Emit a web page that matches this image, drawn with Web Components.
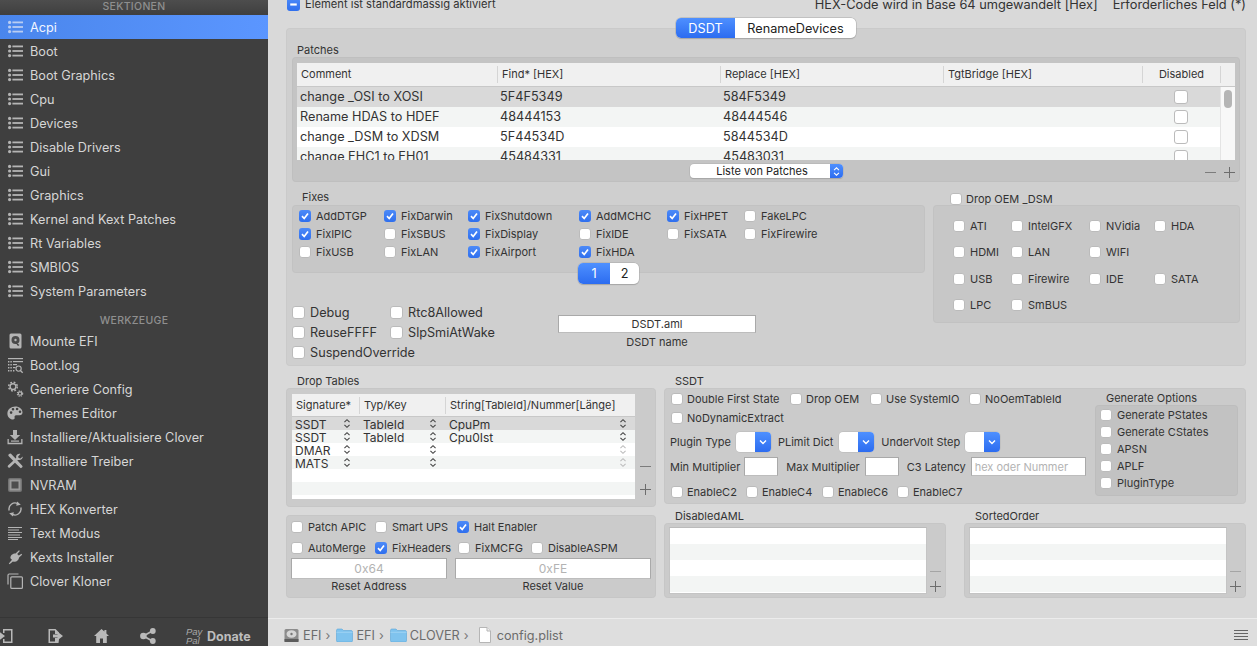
<!DOCTYPE html>
<html>
<head>
<meta charset="utf-8">
<style>
  html, body { margin: 0; height: 100%; overflow: hidden; background: #d9d9d9; }
  body { font-family: Inter, "Liberation Sans", sans-serif; color: #333; }
</style>
</head>
<body>
<clover-app></clover-app>
<script>
const ICONS = {
  list: '<circle cx="2.6" cy="3.4" r="1.6"/><circle cx="2.6" cy="8" r="1.6"/><circle cx="2.6" cy="12.6" r="1.6"/><rect x="5.4" y="2.5" width="10.6" height="1.8"/><rect x="5.4" y="7.1" width="10.6" height="1.8"/><rect x="5.4" y="11.7" width="10.6" height="1.8"/>',
  hdd: '<rect x="2.5" y="0.5" width="12" height="15" rx="1.5"/><circle cx="8.5" cy="7" r="4" fill="#4a4a4a"/><circle cx="8.5" cy="7" r="1.2"/><path d="M8 9l3 4 1.5-1z" fill="#3e3e3e"/>',
  log: '<rect x="1" y="1" width="15" height="1.2"/><rect x="6" y="4" width="10" height="1.2"/><rect x="6" y="7" width="4" height="1.2"/><rect x="6" y="10" width="2.5" height="1.2"/><path d="M1 4h1.4v1.4H1zM3.4 4h1.4v1.4H3.4zM1 7h1.4v1.4H1zM3.4 7h1.4v1.4H3.4zM1 10h1.4v1.4H1zM3.4 10h1.4v1.4H3.4zM1 13h1.4v1.4H1zM3.4 13h1.4v1.4H3.4zM6 13h1.4v1.4H6z"/><circle cx="11.6" cy="11.6" r="2.6" fill="none" stroke="currentColor" stroke-width="1.1"/><path d="M13.4 13.5l2.3 2.3" stroke="currentColor" stroke-width="1.3"/>',
  gears: '<g fill="none" stroke="currentColor"><circle cx="6" cy="5.6" r="2.9" stroke-width="1.4"/><circle cx="6" cy="5.6" r="4.3" stroke-width="1.5" stroke-dasharray="1.8 1.6"/><circle cx="13" cy="12.6" r="1.7" stroke-width="1.1"/><circle cx="13" cy="12.6" r="2.7" stroke-width="1.1" stroke-dasharray="1.2 1"/></g>',
  palette: '<path fill-rule="evenodd" d="M8.4 1.6C3.9 1.6.4 4.6.4 8.4c0 3.5 2.6 6 5.6 6 1.5 0 1.9-.9 1.6-1.9-.3-1.2.2-2.3 1.6-2.3h3.4c1.8 0 2.9-1 2.9-2.6 0-3.5-3.3-6-7.1-6zM4.1 8.9a1.3 1.3 0 1 1 0-2.6 1.3 1.3 0 0 1 0 2.6zM6 5.5a1.3 1.3 0 1 1 0-2.6 1.3 1.3 0 0 1 0 2.6zM10.1 5.3a1.3 1.3 0 1 1 0-2.6 1.3 1.3 0 0 1 0 2.6zM13 8a1.3 1.3 0 1 1 0-2.6A1.3 1.3 0 0 1 13 8z"/>',
  download: '<path d="M6 1h4v5h3.2L8 11 2.8 6H6z"/><path d="M.5 10v5.2h15V10h-1.3v3.8H1.800V10z"/><rect x="4" y="11.5" width="8" height="1.2"/>',
  tools: '<path d="M1.8 1l2-.6 5 5.4 2.8 3 3.9 4.3c.6.8-1.2 2.5-2 1.9L9 10.7 6.2 7.7 1.3 2.700z"/><path d="M15.800 3.400l-2.400 2.200-1.800-.5-.5-1.700L13.400.9c-1.900-.6-4.300.8-4.300 3l.1 1.100L1 12.600c-1 1 .7 2.900 1.900 1.900l7.900-7.600 1.200.2c2.200.1 4-2.200 3.800-3.700z"/>',
  chip: '<rect x="1" y="1" width="14" height="14" rx="2" opacity=".45"/><rect x="2.5" y="2.5" width="11" height="11" opacity=".6"/><rect x="4.5" y="4.5" width="7" height="7" fill="#4d4d4d"/>',
  refresh: '<g fill="none" stroke="currentColor" stroke-width="1.4"><path d="M2.200 9.500A6 6 0 0 1 11 2.800"/><path d="M13.800 6.500A6 6 0 0 1 5 13.200"/></g><path d="M10.200.6l3.600 3.200-4.600.9zM5.800 15.400L2.200 12.200l4.600-.9z"/>',
  lines: '<rect x="1" y="2" width="14" height="1"/><rect x="1" y="4.5" width="11" height="1"/><rect x="1" y="7" width="14" height="1"/><rect x="1" y="9.5" width="12" height="1"/><rect x="1" y="12" width="14" height="1"/><rect x="1" y="14" width="10" height="1"/>',
  plug: '<path d="M9.500 4.500l3.500-3.300.9.900-2.700 3 1.600 1.500 2.700-1.900.6 1-3 2.700c-.4 3-3.300 5.200-6.200 4L3.500 15.200l-.7-.6 3.200-3.800-1.400-1.300c-1-2.600 2.200-5.400 4.900-5z" transform="translate(-1 0)"/>',
  copy: '<path d="M1 11.500V2.200C1 1.500 1.500 1 2.200 1h9.300" fill="none" stroke="currentColor" stroke-width="1.2"/><rect x="3.800" y="3.800" width="11.600" height="11.600" rx="1" fill="none" stroke="currentColor" stroke-width="1.2"/>',
  enter: '<path d="M5 1h9.500v14H5v-4h1.500v2.500H13V2.500H6.500V5H5z"/><path d="M-4 6.500h5V3.500L7 8l-6 4.500v-3h-5z"/>',
  leave: '<path d="M1.500 1h7L12 4.500V6H8V2.500H3v11h5V10h4v1.500L11.500 15h-10z"/><path d="M6 6.500h4.500V3.800L16 8l-5.500 4.200V9.500H6z"/>',
  home: '<path d="M8.500 1L1 8h2.200v7h3.800v-4.500h3V15h3.800V8H16l-2.600-2.500V2h-2v1.600z"/>',
  share: '<circle cx="12.800" cy="3" r="2.900"/><circle cx="12.800" cy="13" r="2.900"/><circle cx="3.400" cy="8" r="3.300"/><path d="M3.400 7l9-5 .8 1.600-9 5zM3.400 9l9 5 .8-1.600-9-5z"/>'
};

function icon(name) {
  return `<svg viewBox="0 0 16 16" width="16" height="16" fill="currentColor" style="overflow:visible;display:block">${ICONS[name]}</svg>`;
}

const CHEVRONS = '<svg viewBox="0 0 8 12" width="8" height="11" fill="none" stroke="currentColor" stroke-width="1.2"><path d="M1.200 4.500L4 1.800l2.800 2.700M1.200 7.500L4 10.200l2.800-2.700"/></svg>';

class BaseEl extends HTMLElement {
  constructor() {
    super();
    this.attachShadow({ mode: 'open' });
  }
  connectedCallback() {
    this.shadowRoot.innerHTML = this.render();
  }
}

class SideItem extends BaseEl {
  render() {
    return `<style>
      :host { display: flex; align-items: center; height: 24px; padding-left: 7px; gap: 7px; color: #d6d6d6; font-size: 12.7px; }
      :host([active]) { background: linear-gradient(90deg, #4a86ec, #5b96ff); color: #f2f6ff; }
      .i { color: #b4b4b4; width: 16px; height: 16px; flex: none; }
      :host([active]) .i { color: #b9cdf2; }
    </style><span class="i">${icon(this.getAttribute('icon'))}</span><slot></slot>`;
  }
}

class SideBar extends BaseEl {
  render() {
    const sek = ['Acpi','Boot','Boot Graphics','Cpu','Devices','Disable Drivers','Gui','Graphics','Kernel and Kext Patches','Rt Variables','SMBIOS','System Parameters'];
    const tools = [['hdd','Mounte EFI'],['log','Boot.log'],['gears','Generiere Config'],['palette','Themes Editor'],['download','Installiere/Aktualisiere Clover'],['tools','Installiere Treiber'],['chip','NVRAM'],['refresh','HEX Konverter'],['lines','Text Modus'],['plug','Kexts Installer'],['copy','Clover Kloner']];
    return `<style>
      :host { display: flex; flex-direction: column; width: 268px; height: 646px; flex: none; background: #3f3f3f; box-sizing: border-box; }
      .top { background: linear-gradient(#4d4d4d, #3f3f3f); }
      h4 { margin: 0; font-size: 10.5px; font-weight: 500; color: #8f8f8f; text-align: center; letter-spacing: .3px; line-height: 14px; }
      .t1 { height: 15px; box-sizing: border-box; padding-top: 1px; line-height: 12px; }
      .t2 { margin: 11px 0 1px; height: 14px; line-height: 14px; }
      .grow { flex: 1; }
      .foot { height: 29px; border-top: 1px solid #363636; display: flex; align-items: center; color: #b9b9b9; overflow: hidden; box-sizing: border-box; padding-top: 8px; }
      .foot span.ic { flex: none; display: block; }
      .pp { font: italic 9.5px/9px "Liberation Sans", sans-serif; color: #a8a8a8; width: 20px; margin-left: 30px; }
      .don { font-size: 12.5px; font-weight: 700; color: #bdbdbd; margin-left: 1px; }
    </style>
    <div class="top"><h4 class="t1">SEKTIONEN</h4></div>
    ${sek.map((s, i) => `<side-item icon="list"${i === 0 ? ' active' : ''}>${s}</side-item>`).join('')}
    <h4 class="t2">WERKZEUGE</h4>
    ${tools.map(t => `<side-item icon="${t[0]}">${t[1]}</side-item>`).join('')}
    <div class="grow"></div>
    <div class="foot">
      <span class="ic" style="margin-left:-2px">${icon('enter')}</span>
      <span class="ic" style="margin-left:33px">${icon('leave')}</span>
      <span class="ic" style="margin-left:30px">${icon('home')}</span>
      <span class="ic" style="margin-left:31px">${icon('share')}</span>
      <span class="pp">Pay<br>Pal</span>
      <span class="don">Donate</span>
    </div>`;
  }
}

class XCheck extends BaseEl {
  render() {
    const mark = this.hasAttribute('mixed')
      ? '<svg viewBox="0 0 12 12"><path d="M3 6h6" stroke="#fff" stroke-width="2" fill="none"/></svg>'
      : '<svg viewBox="0 0 12 12"><path d="M3 6.200l2.200 2.300L9 3.500" stroke="#fff" stroke-width="1.7" fill="none"/></svg>';
    const on = this.hasAttribute('checked') || this.hasAttribute('mixed');
    return `<style>
      :host { display: inline-flex; align-items: center; gap: var(--cb-gap, 5px); height: var(--cb-row, 18px); white-space: nowrap; font-size: inherit; }
      .b { width: var(--cb, 12px); height: var(--cb, 12px); flex: none; box-sizing: border-box; border-radius: 3px; background: #fff; border: 1px solid #bbb; display: block; }
      .b.on { background: linear-gradient(#4c8af8, #2f6fee); border: 0; }
      svg { display: block; width: 100%; height: 100%; }
    </style><span class="b${on ? ' on' : ''}">${on ? mark : ''}</span><slot></slot>`;
  }
}

class SegCtl extends BaseEl {
  render() {
    const items = this.getAttribute('items').split('|');
    const widths = (this.getAttribute('widths') || '').split('|');
    return `<style>
      :host { display: inline-flex; border-radius: 5px; box-shadow: 0 0 0 .5px #aaa, 0 1px 1px rgba(0,0,0,.2); background: #fff; overflow: hidden; height: var(--h, 20px); font-size: 12.7px; color: #222; }
      span { display: flex; align-items: center; justify-content: center; }
      .on { background: linear-gradient(#4e90ff, #2c6cf0); color: #fff; }
    </style>${items.map((s, i) => `<span class="${i === 0 ? 'on' : ''}" style="width:${widths[i]}px">${s}</span>`).join('')}`;
  }
}

class PopUp extends BaseEl {
  render() {
    return `<style>
      :host { display: flex; width: 153px; height: 14px; background: #fff; border-radius: 4px; box-shadow: 0 0 0 .5px #b0b0b0, 0 1px 1px rgba(0,0,0,.2); overflow: hidden; font-size: 11px; color: #222; }
      .t { flex: 1; text-align: center; line-height: 14px; padding-left: 5px; }
      .a { width: 13px; background: linear-gradient(#4e90ff, #2c6cf0); color: #fff; display: flex; align-items: center; justify-content: center; }
      svg { height: 11px; width: 7px; }
    </style><span class="t"><slot></slot></span><span class="a">${CHEVRONS}</span>`;
  }
}

class MiniSelect extends BaseEl {
  render() {
    return `<style>
      :host { display: inline-flex; flex: none; width: 35px; height: 20px; background: #fff; border-radius: 4px; box-shadow: 0 0 0 .5px #b8b8b8; overflow: hidden; }
      i { flex: 1; }
      b { width: 16px; background: linear-gradient(#4e90ff, #2c6cf0); display: flex; align-items: center; justify-content: center; }
    </style><i></i><b><svg viewBox="0 0 8 6" width="8" height="6" fill="none" stroke="#fff" stroke-width="1.4"><path d="M1 1.500L4 4.500l3-3"/></svg></b>`;
  }
}

class TextBox extends BaseEl {
  render() {
    return `<style>
      :host { display: flex; align-items: center; justify-content: var(--tb-align, center); box-sizing: border-box; background: #fff; border: 1px solid #a9a9a9; border-bottom-color: #bdbdbd; color: var(--tb-color, #b3b3b3); font-size: var(--tb-size, 13px); padding: 0 3px; white-space: nowrap; }
    </style><slot></slot>`;
  }
}

class PlusMinus extends BaseEl {
  render() {
    return `<style>
      :host { display: inline-flex; flex-direction: var(--pm-dir, row); gap: var(--pm-gap, 9px); align-items: center; color: #6d6d6d; }
      svg { display: block; }
      .m { color: var(--pm-minus, #7c7c7c); }
    </style><svg class="m" width="11" height="11" stroke="currentColor"><path d="M0 5.500h11"/></svg><svg width="11" height="11" stroke="currentColor"><path d="M0 5.500h11M5.500 0v11"/></svg>`;
  }
}

class PatchTable extends BaseEl {
  render() {
    const rows = [['change _OSI to XOSI','5F4F5349','584F5349'],['Rename HDAS to HDEF','48444153','48444546'],['change _DSM to XDSM','5F44534D','5844534D'],['change EHC1 to EH01','45484331','45483031']];
    const bg = ['#d9d9d9','#f3f5f4','#fff','#f3f5f4'];
    const cols = '200px 223px 223px 199px 78px 15px';
    return `<style>
      :host { display: block; position: relative; background: #fff; height: 97px; overflow: hidden; }
      .r { display: grid; grid-template-columns: ${cols}; align-items: center; }
      .h { height: 23px; background: #f0f0f0; border-bottom: 1px solid #c8c8c8; font-size: 11px; color: #333; }
      .h span { border-left: 1px solid #d5d5d5; padding-left: 4px; height: 17px; line-height: 17px; box-sizing: border-box; }
      .h span:first-child { border: 0; }
      .h .c { text-align: center; padding: 0; }
      .d { height: 20px; font-size: 12.7px; color: #333; }
      .d span { padding: 0 0 2px 3px; }
      .d .cb { display: flex; justify-content: center; padding: 0; --cb: 14px; --cb-row: 20px; --cb-gap: 0; }
      .sb { position: absolute; right: 0; top: 24px; bottom: 0; width: 14px; background: #f8f8f8; border-left: 1px solid #e4e4e4; }
      .sb i { display: block; width: 8px; height: 18px; margin: 3px 3px; border-radius: 4px; background: #b5b5b5; }
    </style>
    <div class="r h"><span>Comment</span><span>Find* [HEX]</span><span>Replace [HEX]</span><span>TgtBridge [HEX]</span><span class="c">Disabled</span><span></span></div>
    ${rows.map((r, i) => `<div class="r d" style="background:${bg[i]}"><span>${r[0]}</span><span>${r[1]}</span><span>${r[2]}</span><span></span><span class="cb"><x-check></x-check></span><span></span></div>`).join('')}
    <div class="sb"><i></i></div>`;
  }
}

class DropTable extends BaseEl {
  render() {
    const rows = [['SSDT','TableId','CpuPm'],['SSDT','TableId','Cpu0Ist'],['DMAR','',''],['MATS','','']];
    const bg = ['#d9d9d9','#f3f5f4','#fff','#f3f5f4','#fff','#f3f5f4'];
    const cols = '67px 86px 190px';
    const cell = (t, faint) => `<span class="cell">${t}<em style="${faint ? 'color:#bdbdbd' : ''}">${CHEVRONS}</em></span>`;
    const body = bg.map((c, i) => {
      const r = rows[i];
      return `<div class="r d" style="background:${c}">${r ? cell(r[0]) + cell(r[1]) + cell(r[2], i > 1) : ''}</div>`;
    }).join('');
    return `<style>
      :host { display: block; background: #fff; width: 343px; height: 105px; overflow: hidden; flex: none; }
      .r { display: grid; grid-template-columns: ${cols}; }
      .h { height: 22px; align-items: center; background: #f0f0f0; border-bottom: 1px solid #c8c8c8; font-size: 11px; }
      .h span { border-left: 1px solid #d5d5d5; padding-left: 4px; height: 17px; line-height: 17px; }
      .h span:first-child { border: 0; padding-left: 4px; }
      .d { height: 13px; font-size: 12px; line-height: 15px; color: #333; }
      .cell { position: relative; padding-left: 3px; display: flex; height: 13px; }
      .d .cell:nth-child(2), .d .cell:nth-child(3) { padding-left: 4px; }
      em { display: block; margin: 0 8px 0 auto; color: #444; font-style: normal; }
      svg { display: block; margin-top: 1px; }
    </style>
    <div class="r h"><span>Signature*</span><span>Typ/Key</span><span>String[TableId]/Nummer[Länge]</span></div>${body}`;
  }
}

class StripeList extends BaseEl {
  render() {
    return `<style>
      :host { display: block; width: 258px; height: 67px; background: repeating-linear-gradient(#fff 0 16px, #f3f5f4 16px 32px); border: 1px solid #c4c4c4; border-top-color: #bbb; box-sizing: border-box; flex: none; }
    </style>`;
  }
}

class GroupBox extends BaseEl {
  render() {
    return `<style>
      :host { display: block; background: var(--gb-bg, #c7c7c7); border-radius: 4px; box-shadow: inset 0 0 0 1px rgba(0,0,0,.025); box-sizing: border-box; position: relative; }
    </style><slot></slot>`;
  }
}

class FieldLabel extends BaseEl {
  render() {
    return `<style>
      :host { display: block; font-size: 11px; line-height: 13px; color: #333; padding-left: var(--fl-pad, 11px); }
    </style><slot></slot>`;
  }
}

class StatusBar extends BaseEl {
  render() {
    const folder = '<svg width="17" height="14" viewBox="0 0 17 14"><path d="M.5 2.500C.5 1.500 1 1 2 1h4l1.500 1.500H15c1 0 1.500.5 1.500 1.500v8.500c0 1-.5 1.500-1.500 1.500H2c-1 0-1.500-.5-1.500-1.500z" fill="#7fc3ee" stroke="#5ba6d8" stroke-width=".6"/><path d="M.5 4.300h16" stroke="#9ed3f3"/></svg>';
    const disk = '<svg width="15" height="15" viewBox="0 0 15 15"><rect x=".5" y="1" width="14" height="13" rx="1.500" fill="#8c8c8c"/><ellipse cx="7.500" cy="6" rx="5" ry="3.800" fill="#d6d6d6"/><circle cx="7.500" cy="6" r="1.200" fill="#777"/><rect x=".5" y="11" width="14" height="3" fill="#5c5c5c"/></svg>';
    const doc = '<svg width="12" height="16" viewBox="0 0 12 16"><path d="M.5.500h7.500l3.500 3.500v11.500H.5z" fill="#fff" stroke="#b5b5b5"/><path d="M8 .500V4h3.500" fill="#eee" stroke="#b5b5b5"/></svg>';
    const sep = '<b>›</b>';
    return `<style>
      :host { display: flex; align-items: center; height: 28px; flex: none; box-sizing: border-box; background: #dedede; border-top: 1px solid #ececec; font-size: 12.7px; color: #6c6c6c; padding: 5px 9px 0 16px; }
      svg { display: block; flex: none; }
      b { font-weight: 400; margin: 0 6px 0 4px; color: #777; }
      span { white-space: nowrap; }
      .end { margin-left: auto; }
    </style>${disk}<span style="margin-left:4px">EFI</span>${sep}${folder}<span style="margin-left:3px">EFI</span>${sep}${folder}<span style="margin-left:3px">CLOVER</span>${sep}<i style="width:4px"></i>${doc}<span style="margin-left:6px">config.plist</span>
    <svg class="end" width="14" height="11" viewBox="0 0 14 11" stroke="#666"><path d="M0 .5h14M0 3.500h14M0 6.500h14M0 9.500h14"/></svg>`;
  }
}

class CloverApp extends BaseEl {
  render() {
    const chk = (label, on, w) => `<x-check${on ? ' checked' : ''}${w ? ` style="width:${w}px"` : ''}>${label}</x-check>`;
    const fixes = [['AddDTGP',1],['FixDarwin',1],['FixShutdown',1],['AddMCHC',1],['FixHPET',1],['FakeLPC',0],
      ['FixIPIC',1],['FixSBUS',0],['FixDisplay',1],['FixIDE',0],['FixSATA',0],['FixFirewire',0],
      ['FixUSB',0],['FixLAN',0],['FixAirport',1],['FixHDA',1]];
    const oem = ['ATI','IntelGFX','NVidia','HDA','HDMI','LAN','WIFI','','USB','Firewire','IDE','SATA','LPC','SmBUS'];
    return `<style>
      :host { display: flex; width: 1257px; height: 646px; overflow: hidden; }
      .main { flex: 1; display: flex; flex-direction: column; min-width: 0; background: #d9d9d9; }
      .content { flex: 1; padding: 0 11px 0 18px; overflow: hidden; font-size: 11px; }
      .topbar { display: flex; height: 14px; margin-top: -3px; align-items: center; font-size: 11.2px; padding-left: 1px; --cb: 13px; }
      .topbar .r { margin-left: auto; font-size: 12.8px; white-space: nowrap; }
      .topbar .r2 { margin-left: 15px; font-size: 12.8px; white-space: nowrap; }
      .big { margin-top: 17px; height: 338px; --gb-bg: #cfcfcf; padding: 0 6px; }
      .tabs { display: flex; justify-content: center; height: 10px; --h: 20px; position: relative; top: -10px; }
      .patches { margin-top: 6px; }
      .patches-box { height: 125px; --gb-bg: #c4c4c4; padding: 6px 5px 0; display: flex; flex-direction: column; }
      .pfoot { display: grid; grid-template-columns: 1fr auto 1fr; align-items: center; margin-top: 4px; }
      .pfoot plus-minus { justify-self: end; margin-top: 2px; --pm-gap: 8px; }
      .mid { display: flex; gap: 8px; margin-top: 9px; }
      .mid-l { width: 633px; flex: none; }
      .mid-r { width: 307px; flex: none; }
      .fixes { height: 68px; margin-top: 1px; --gb-bg: #c7c7c7; padding: 2px 0 0 7px; }
      .fgrid { display: grid; grid-template-columns: 85px 84px 111px 88px 77px auto; }
      seg-ctl.s2 { margin: 2px 0 0 279px; --h: 21px; display: flex; width: 61px; }
      .opts { display: flex; margin-top: 29px; --cb: 13px; --cb-row: 20px; font-size: 12.7px; }
      .ogrid { display: grid; grid-template-columns: 98px auto; width: 266px; align-content: start; }
      .dsdt { width: 198px; text-align: center; margin-top: 13px; font-size: 11px; }
      .dsdt text-box { height: 18px; --tb-color: #333; --tb-size: 11px; margin-bottom: 2px; }
      .dsdt span { line-height: 15px; }
      .oemhead { height: 13px; margin-top: 1px; padding-left: 17px; display: flex; align-items: center; --cb-gap: 4px; }
      .oem { height: 118px; --gb-bg: #c7c7c7; padding: 8px 0 0 20px; }
      .ogr { display: grid; grid-template-columns: 58px 78px 65px auto; grid-auto-rows: 26.3px; --cb-row: 26px; }
      .lower { display: grid; grid-template-columns: 370px 582px; gap: 0 8px; margin-top: 9px; }
      .col { min-width: 0; }
      .drop { height: 119px; --gb-bg: #cbcbcb; padding: 6px; display: flex; gap: 5px; }
      .drop plus-minus, .list plus-minus { --pm-dir: column; align-self: flex-end; }
      .drop plus-minus { --pm-gap: 12px; margin-bottom: 6px; }
      .misc { height: 83px; margin-top: 8px; --gb-bg: #cbcbcb; padding: 2px 5px 0; --cb: 12px; }
      .mrow { display: flex; height: 20px; align-items: center; }
      .mrow + .mrow { margin-top: 1px; }
      .minp { display: grid; grid-template-columns: 156px 196px; gap: 0 8px; text-align: center; }
      .minp text-box { height: 21px; --tb-size: 12px; }
      .minp span { line-height: 15px; }
      .ssdt { height: 116px; --gb-bg: #cbcbcb; padding: 2px 8px 0 6px; display: flex; }
      .ss-l { width: 425px; flex: none; }
      .srow { display: flex; align-items: center; gap: 0; --cb: 12px; --cb-gap: 4px; white-space: nowrap; }
      .gen { flex: 1; }
      .gen field-label { margin-top: 2px; }
      .genbox { height: 91px; --gb-bg: #c2c2c2; padding: 1px 0 0 5px; display: flex; flex-direction: column; --cb: 12px; --cb-row: 17px; }
      .lists { display: grid; grid-template-columns: 282px 282px; gap: 18px; padding-top: 6px; }
      .list { height: 75px; --gb-bg: #cbcbcb; padding: 4px 5px 0; display: flex; }
      .list plus-minus { margin: 39px 0 0 3px; --pm-gap: 4px; --pm-minus: #a5a5a5; align-self: flex-start; }
    </style>
    <side-bar></side-bar>
    <div class="main">
      <div class="content">
        <div class="topbar">
          <x-check mixed>Element ist standardmassig aktiviert</x-check>
          <span class="r">HEX-Code wird in Base 64 umgewandelt [Hex]</span>
          <span class="r2">Erforderliches Feld (*)</span>
        </div>
        <group-box class="big">
          <div class="tabs"><seg-ctl items="DSDT|RenameDevices" widths="59|121"></seg-ctl></div>
          <div class="patches">
            <field-label style="--fl-pad:5px">Patches</field-label>
            <group-box class="patches-box">
              <patch-table></patch-table>
              <div class="pfoot"><i></i><pop-up>Liste von Patches</pop-up><plus-minus></plus-minus></div>
            </group-box>
          </div>
          <div class="mid">
            <div class="mid-l">
              <field-label style="--fl-pad:10px">Fixes</field-label>
              <group-box class="fixes">
                <div class="fgrid">${fixes.map(f => chk(f[0], f[1])).join('')}</div>
                <seg-ctl class="s2" items="1|2" widths="32|29"></seg-ctl>
              </group-box>
              <div class="opts">
                <div class="ogrid">
                  ${chk('Debug')}${chk('Rtc8Allowed')}${chk('ReuseFFFF')}${chk('SlpSmiAtWake')}${chk('SuspendOverride')}
                </div>
                <div class="dsdt"><text-box>DSDT.aml</text-box><span>DSDT name</span></div>
              </div>
            </div>
            <div class="mid-r">
              <div class="oemhead"><x-check style="--cb:12px">Drop OEM _DSM</x-check></div>
              <group-box class="oem">
                <div class="ogr">${oem.map(o => o ? chk(o) : '<i></i>').join('')}</div>
              </group-box>
            </div>
          </div>
        </group-box>
        <div class="lower">
          <div class="col">
            <field-label>Drop Tables</field-label>
            <group-box class="drop"><drop-table></drop-table><plus-minus></plus-minus></group-box>
            <group-box class="misc">
              <div class="mrow">${chk('Patch APIC', 0, 84)}${chk('Smart UPS', 0, 82)}${chk('Halt Enabler', 1)}</div>
              <div class="mrow">${chk('AutoMerge', 0, 84)}${chk('FixHeaders', 1, 83)}${chk('FixMCFG', 0, 73)}${chk('DisableASPM')}</div>
              <div class="minp"><text-box>0x64</text-box><text-box>0xFE</text-box><span>Reset Address</span><span>Reset Value</span></div>
            </group-box>
          </div>
          <div class="col">
            <field-label>SSDT</field-label>
            <group-box class="ssdt">
              <div class="ss-l">
                <div class="srow" style="height:18px;margin-left:1px">${chk('Double First State', 0, 119)}${chk('Drop OEM', 0, 80)}${chk('Use SystemIO', 0, 99)}${chk('NoOemTableId')}</div>
                <div class="srow" style="height:18px;margin-top:1px;margin-left:1px">${chk('NoDynamicExtract')}</div>
                <div class="srow" style="height:20px;margin-top:5px">Plugin Type<mini-select style="margin:0 7px 0 5px"></mini-select>PLimit Dict<mini-select style="margin:0 7px 0 6px"></mini-select>UnderVolt Step<mini-select style="margin-left:5px"></mini-select></div>
                <div class="srow" style="height:19px;margin-top:5px">Min Multiplier<text-box style="width:34px;height:19px;margin:0 8px 0 4px"></text-box>Max Multiplier<text-box style="width:34px;height:19px;margin:0 8px 0 5px"></text-box>C3 Latency<text-box style="width:115px;height:19px;margin-left:5px;--tb-size:11px;--tb-align:flex-start">hex oder Nummer</text-box></div>
                <div class="srow" style="height:18px;margin-top:7px;margin-left:1px">${chk('EnableC2', 0, 75)}${chk('EnableC4', 0, 76)}${chk('EnableC6', 0, 75)}${chk('EnableC7')}</div>
              </div>
              <div class="gen">
                <field-label>Generate Options</field-label>
                <group-box class="genbox">${chk('Generate PStates')}${chk('Generate CStates')}${chk('APSN')}${chk('APLF')}${chk('PluginType')}</group-box>
              </div>
            </group-box>
            <div class="lists">
              <div>
                <field-label>DisabledAML</field-label>
                <group-box class="list"><stripe-list></stripe-list><plus-minus></plus-minus></group-box>
              </div>
              <div>
                <field-label>SortedOrder</field-label>
                <group-box class="list"><stripe-list></stripe-list><plus-minus></plus-minus></group-box>
              </div>
            </div>
          </div>
        </div>
      </div>
      <status-bar></status-bar>
    </div>`;
  }
}

customElements.define('side-item', SideItem);
customElements.define('side-bar', SideBar);
customElements.define('x-check', XCheck);
customElements.define('seg-ctl', SegCtl);
customElements.define('pop-up', PopUp);
customElements.define('mini-select', MiniSelect);
customElements.define('text-box', TextBox);
customElements.define('plus-minus', PlusMinus);
customElements.define('patch-table', PatchTable);
customElements.define('drop-table', DropTable);
customElements.define('stripe-list', StripeList);
customElements.define('group-box', GroupBox);
customElements.define('field-label', FieldLabel);
customElements.define('status-bar', StatusBar);
customElements.define('clover-app', CloverApp);
</script>
</body>
</html>
